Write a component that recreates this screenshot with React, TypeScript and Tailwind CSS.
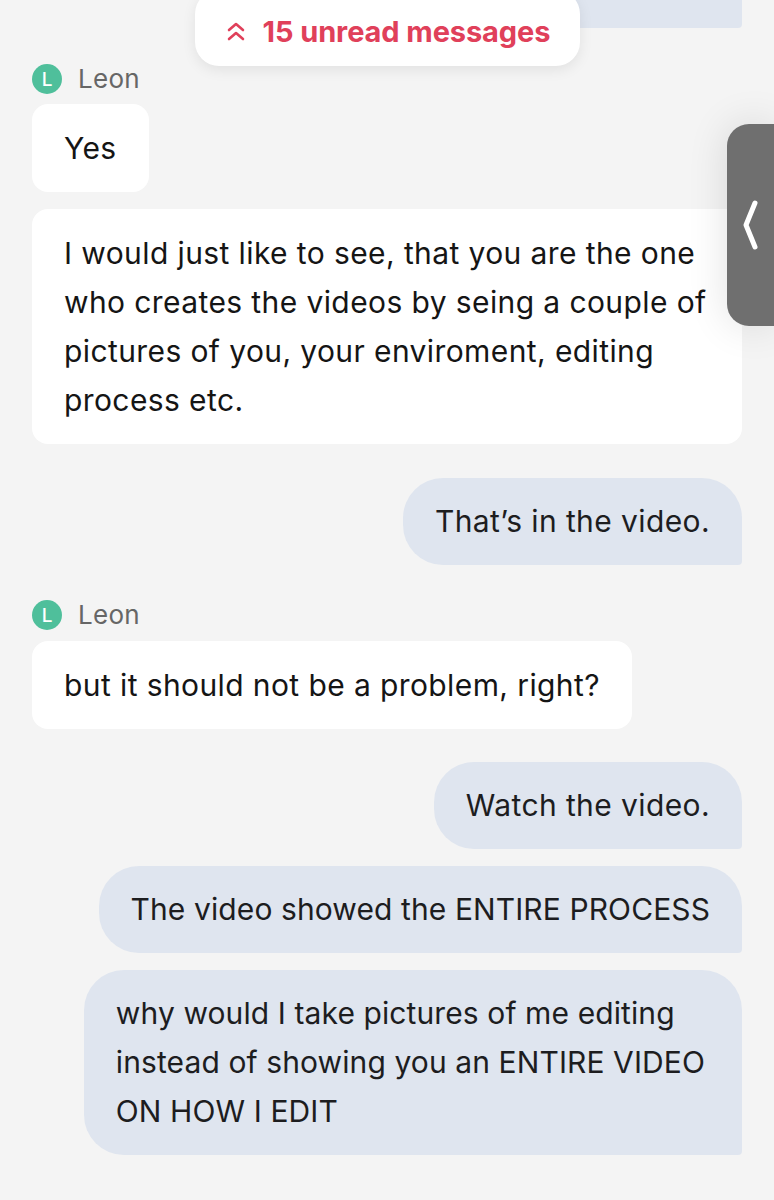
import React from 'react';

const FONT = "font-['Inter','Liberation_Sans',sans-serif]";

const Sender: React.FC<{ name: string }> = ({ name }) => (
  <div className="flex items-center gap-4 h-[30px]">
    <div className="w-[30px] h-[30px] rounded-full bg-[#4fbf9b] flex items-center justify-center text-white text-[19px] leading-none font-medium">
      L
    </div>
    <span className="text-[26px] text-[#666666] leading-none tracking-[0.3px]">{name}</span>
  </div>
);

const InBubble: React.FC<{ children: React.ReactNode; full?: boolean }> = ({ children, full }) => (
  <div
    className={`bg-white rounded-[16px] px-8 pt-[20px] pb-[19px] text-[30px] leading-[49px] tracking-[0.4px] text-[#151515] ${
      full ? 'w-[710px]' : 'self-start'
    }`}
  >
    {children}
  </div>
);

const OutBubble: React.FC<{ children: React.ReactNode; tracking?: string; pr?: string }> = ({ children, tracking, pr }) => (
  <div
    className={`self-end bg-[#dfe5ef] rounded-[40px] rounded-br-[4px] py-[19px] pl-8 ${pr ?? 'pr-8'} text-[30px] leading-[49px] text-[#1d1d1f] whitespace-nowrap ${
      tracking ?? 'tracking-[0.4px]'
    }`}
  >
    {children}
  </div>
);

export default function App() {
  return (
    <div className={`relative w-[774px] h-[1200px] overflow-hidden bg-[#f4f4f4] ${FONT}`}>
      {/* top partial outgoing bubble */}
      <div className="absolute right-[32px] top-0 w-[200px] h-[28px] bg-[#dfe5ef] rounded-br-[4px]" />

      <div className="flex flex-col px-[32px] pt-[64px]">
        <Sender name="Leon" />
        <div className="flex flex-col gap-[17px] mt-[10px]">
          <InBubble>Yes</InBubble>
          <InBubble full>
            I would just like to see, that you are the one who creates the videos by seing a couple of pictures of you,
            your enviroment, editing process etc.
          </InBubble>
        </div>

        <div className="flex flex-col mt-[34px]">
          <OutBubble>That’s in the video.</OutBubble>
        </div>

        <div className="mt-[35px]">
          <Sender name="Leon" />
        </div>
        <div className="flex flex-col mt-[11px]">
          <InBubble>but it should not be a problem, right?</InBubble>
        </div>

        <div className="flex flex-col gap-[17px] mt-[33px]">
          <OutBubble>Watch the video.</OutBubble>
          <OutBubble tracking="tracking-[0.1px]">The video showed the ENTIRE PROCESS</OutBubble>
          <OutBubble tracking="tracking-[0.1px]" pr="pr-[37px]">
            why would I take pictures of me editing
            <br />
            instead of showing you an ENTIRE VIDEO
            <br />
            ON HOW I EDIT
          </OutBubble>
        </div>
      </div>

      {/* unread pill */}
      <div className="absolute left-[195px] top-[-10px] w-[385px] h-[76px] bg-white rounded-[24px] shadow-[0_4px_14px_rgba(0,0,0,0.08)] flex items-center justify-center gap-4 pt-[8px]">
        <svg width="22" height="22" viewBox="0 0 22 22" fill="none" stroke="#e0405a" strokeWidth="2.6" strokeLinecap="round" strokeLinejoin="round">
          <path d="M4 9l7-6 7 6" />
          <path d="M4 18l7-6 7 6" />
        </svg>
        <span className="text-[29px] font-bold text-[#e0405a] tracking-[-0.1px]">15 unread messages</span>
      </div>

      {/* side handle */}
      <div className="absolute right-0 top-[124px] w-[47px] h-[202px] bg-[#6f6f6f] rounded-l-[22px] shadow-[0_0_40px_rgba(0,0,0,0.12)] flex items-center justify-center">
        <svg width="20" height="54" viewBox="0 0 20 54" fill="none" stroke="white" strokeWidth="5" strokeLinecap="round" strokeLinejoin="round">
          <path d="M14 5L5 27l9 22" />
        </svg>
      </div>
    </div>
  );
}
